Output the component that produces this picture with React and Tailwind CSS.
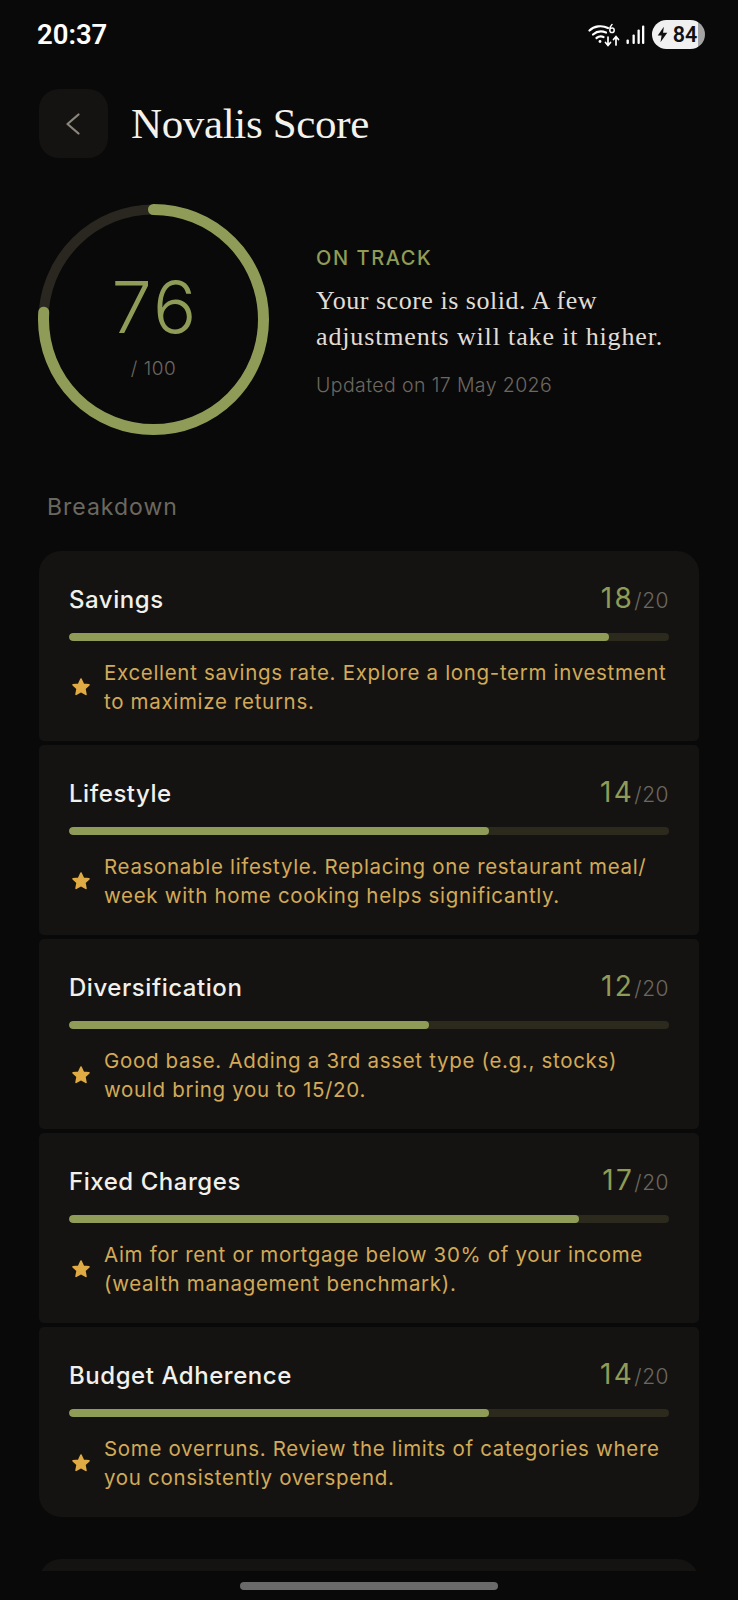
import React from "react";

const rows = [
  ["Savings", 18, "Excellent savings rate. Explore a long-term investment", "to maximize returns."],
  ["Lifestyle", 14, "Reasonable lifestyle. Replacing one restaurant meal/", "week with home cooking helps significantly."],
  ["Diversification", 12, "Good base. Adding a 3rd asset type (e.g., stocks)", "would bring you to 15/20."],
  ["Fixed Charges", 17, "Aim for rent or mortgage below 30% of your income", "(wealth management benchmark)."],
  ["Budget Adherence", 14, "Some overruns. Review the limits of categories where", "you consistently overspend."],
];

function StatusBar() {
  return (
    <div className="h-[89px] flex items-start justify-between pl-[37px] pr-[33px] pt-[20px]">
      <span className="font-['Roboto',sans-serif] font-semibold text-[27.5px] leading-[30px] text-white">20:37</span>
      <div className="flex items-center h-[29px]">
        <svg width="32" height="24" viewBox="0 0 32 24" fill="none" stroke="#fff" strokeLinecap="round" className="mr-[5px]">
          <path d="M1.5 7.5C6 3 14 2 20 5" strokeWidth="2.2" />
          <path d="M5 11.5C8.5 8.5 13 7.5 18 9.5" strokeWidth="2.2" />
          <path d="M8.5 15C10.5 13.5 13 13 15.5 14" strokeWidth="2.2" />
          <circle cx="12" cy="18.5" r="1.4" fill="#fff" stroke="none" />
          <path d="M24 1.5C22.3 3 21.8 5 21.8 7C21.8 8.6 22.8 9.6 24 9.6C25.2 9.6 26.2 8.7 26.2 7.2C26.2 5.8 25.2 5 24 5C23 5 22.2 5.6 21.8 6.5" strokeWidth="1.5" />
          <path d="M20 14V22M17.5 19.5L20 22.5L22.5 19.5" strokeWidth="1.7" />
          <path d="M28 22V14M25.5 16.5L28 13.5L30.5 16.5" strokeWidth="1.7" />
        </svg>
        <svg width="21" height="24" viewBox="0 0 21 24" fill="#fff" className="mr-[6px]">
          <rect x="1.5" y="16.5" width="2.4" height="4.5" rx="1" />
          <rect x="7.5" y="11.5" width="2.3" height="9.5" rx="1" />
          <rect x="12.5" y="6.5" width="2.3" height="14.5" rx="1" />
          <rect x="17" y="2.5" width="2.3" height="18.5" rx="1" />
        </svg>
        <div className="w-[53px] h-[29px] rounded-full overflow-hidden flex items-center justify-center gap-[5px] pr-[3px] bg-[linear-gradient(90deg,#f0f0f0_0,#f0f0f0_86%,#a3a3a3_86%,#a3a3a3_100%)]">
          <svg width="11" height="17" viewBox="0 0 12 18" fill="#111"><path d="M7.5 0.5L0.8 10.2H5L3.8 17.5L11.2 7H6.6Z" /></svg>
          <span className="font-['Roboto',sans-serif] font-semibold text-[21.5px] leading-[29px] text-[#111]">84</span>
        </div>
      </div>
    </div>
  );
}

function Ring() {
  const r = 110;
  const c = 2 * Math.PI * r;
  return (
    <div className="relative w-[231px] h-[231px] shrink-0">
      <svg width="231" height="231" viewBox="0 0 231 231" className="-rotate-90">
        <circle cx="115.5" cy="115.5" r={r} fill="none" stroke="#2a2720" strokeWidth="10" />
        <circle cx="115.5" cy="115.5" r={r} fill="none" stroke="#8f9c57" strokeWidth="11" strokeLinecap="round" strokeDasharray={`${c * 0.76} ${c}`} />
      </svg>
      <div className="absolute inset-0 flex flex-col items-center">
        <span className="mt-[67px] pl-[3px] font-['Inter',sans-serif] font-[350] text-[72px] leading-[72px] tracking-[2.2px] text-[#8f9c57]">76</span>
        <span className="mt-[14px] font-['Inter',sans-serif] font-light text-[19px] leading-[24px] tracking-[0.5px] text-[#6b6860]">/ 100</span>
      </div>
    </div>
  );
}

function Row({ name, score, l1, l2 }) {
  return (
    <div className="h-[190px] bg-[#151311] rounded-[5px] first:rounded-t-[22px] last:rounded-b-[22px] px-[30px] pt-[33px]">
      <div className="flex items-start justify-between h-[32px]">
        <span className="text-[24px] leading-[32px] font-[450] tracking-[0.55px] text-[#f2f0ea]">{name}</span>
        <span className="-mt-[2px] leading-[32px] whitespace-nowrap">
          <span className="text-[28px] font-normal tracking-[2.4px] text-[#8f9c57]">{score}</span>
          <span className="text-[21px] font-light tracking-[0.5px] text-[#6b6860]">/20</span>
        </span>
      </div>
      <div className="mt-[17px] h-[8px] rounded-full bg-[#2b2a1c] overflow-hidden">
        <div className="h-full rounded-full bg-[#8f9c57]" style={{ width: `${(score / 20) * 100}%` }} />
      </div>
      <div className="mt-[17px] flex items-center">
        <svg width="20" height="20" viewBox="0 0 24 24" fill="#e0aa45" stroke="#e0aa45" strokeWidth="2" strokeLinejoin="round" className="shrink-0 ml-[2px] mr-[13px]">
          <path d="M12 2.5l2.9 6.2 6.6.8-4.9 4.6 1.3 6.7L12 17.4l-5.9 3.4 1.3-6.7-4.9-4.6 6.6-.8z" />
        </svg>
        <p className="text-[20.5px] leading-[29px] tracking-[0.68px] text-[#d2aa58] whitespace-nowrap">
          {l1}<br />{l2}
        </p>
      </div>
    </div>
  );
}

export default function App() {
  return (
    <div className="relative w-[738px] h-[1600px] overflow-hidden bg-[#0a0909] font-['Inter',sans-serif]">
      <StatusBar />
      <div className="flex items-center gap-[23px] px-[39px]">
        <button className="w-[69px] h-[69px] rounded-[20px] bg-[#151311] flex items-center justify-center">
          <svg width="16" height="24" viewBox="0 0 16 24" fill="none" stroke="#8a867a" strokeWidth="2.3" strokeLinecap="round" strokeLinejoin="round" className="mr-[2px]"><path d="M13.5 2.5L2.5 12l11 9.5" /></svg>
        </button>
        <h1 className="font-['Liberation_Serif',serif] font-normal text-[43px] leading-[50px] tracking-[-0.35px] text-[#f4f2ec]">Novalis Score</h1>
      </div>
      <div className="mt-[46px] px-[38px] flex items-center gap-[47px]">
        <Ring />
        <div className="pt-[4px]">
          <div className="-mt-[1px] text-[20px] leading-[28px] font-medium tracking-[1.6px] text-[#8f9c57]">ON TRACK</div>
          <p className="mt-[11px] font-['Liberation_Serif',serif] text-[26px] leading-[36px] tracking-[0.85px] text-[#e0ddd6] whitespace-nowrap"><span className="tracking-[0.52px]">Your score is solid. A few</span><br />adjustments will take it higher.</p>
          <div className="mt-[17px] text-[19.5px] leading-[26px] font-light tracking-[0.4px] text-[#6b6860]">Updated on 17 May 2026</div>
        </div>
      </div>
      <div className="mt-[57px] pl-[47px] text-[23px] leading-[30px] font-normal tracking-[1px] text-[#6b6860]">Breakdown</div>
      <div className="mt-[29px] mx-[39px] flex flex-col gap-[4px]">
        {rows.map(([n, s, a, b]) => <Row key={n} name={n} score={s} l1={a} l2={b} />)}
      </div>
      <div className="mt-[42px] mx-[39px] h-[80px] rounded-t-[22px] bg-[#151311]" />
      <div className="absolute left-0 right-0 bottom-0 h-[29px] bg-[#0a0909] flex justify-center pt-[11px]">
        <div className="w-[258px] h-[8px] rounded-full bg-[#6a6a6a]" />
      </div>
    </div>
  );
}
